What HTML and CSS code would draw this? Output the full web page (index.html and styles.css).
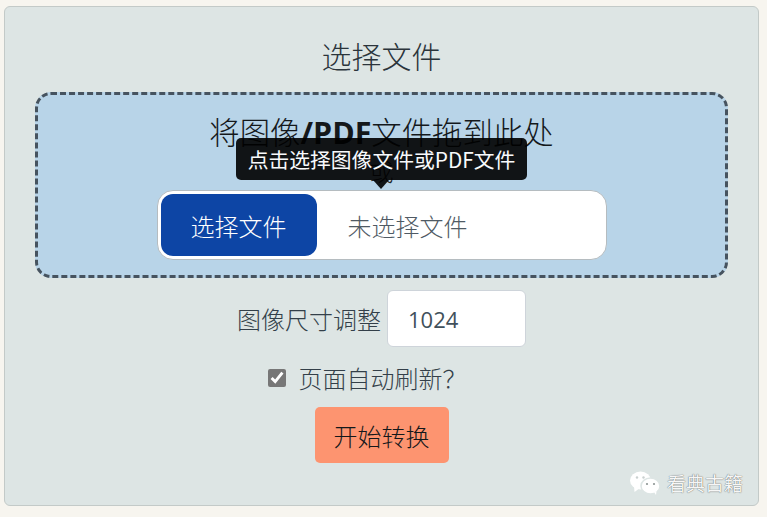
FILE: index.html
```html
<!DOCTYPE html>
<html lang="zh-CN">
<head>
    <meta charset="UTF-8">
    <meta name="viewport" content="width=device-width, initial-scale=1.0">
    <title>选择文件</title>
    <link rel="stylesheet" href="styles.css">
</head>
<body>
    <div class="card">
        <h2 class="card-title">选择文件</h2>

        <div class="drop-zone">
            <h3 class="drop-title">将图像<b>/PDF</b>文件拖到此处</h3>
            <p class="drop-or">或</p>
            <div class="tooltip">点击选择图像文件或PDF文件</div>
            <div class="file-picker">
                <span class="file-button">选择文件</span>
                <span class="file-name">未选择文件</span>
            </div>
        </div>

        <div class="size-row">
            <label for="size">图像尺寸调整</label>
            <input id="size" class="size-input" type="text" value="1024">
        </div>

        <div class="check-row">
            <input id="refresh" class="check" type="checkbox" checked>
            <label for="refresh">页面自动刷新？</label>
        </div>

        <button class="start-button">开始转换</button>

        <div class="watermark">
            <svg class="wechat" width="32" height="24" viewBox="0 0 32 24">
                <ellipse cx="11.5" cy="9.5" rx="10.5" ry="9" fill="#fff"/>
                <path d="M5 15 L5.5 21 L11 17 Z" fill="#fff"/>
                <ellipse cx="21.5" cy="15" rx="9.5" ry="8" fill="#fff" stroke="#dde5e4" stroke-width="1.5"/>
                <path d="M25 21 L27 24 L27.5 20 Z" fill="#fff"/>
                <circle cx="8" cy="6.5" r="1.2" fill="#c9d0cf"/>
                <circle cx="14.5" cy="6.5" r="1.2" fill="#c9d0cf"/>
                <circle cx="18" cy="13" r="1.1" fill="#8d9594"/>
                <circle cx="25" cy="13" r="1.1" fill="#8d9594"/>
            </svg>
            <span>看典古籍</span>
        </div>
    </div>
</body>
</html>
```

FILE: styles.css
```css
* {
    margin: 0;
    padding: 0;
    box-sizing: border-box;
}

body {
    font-family: "Noto Sans CJK SC", "Noto Sans", sans-serif;
    font-weight: 300;
    background: #f7f5ef;
    color: #333f49;
    padding: 6px 8px 11px 4px;
}

.card {
    position: relative;
    height: 500px;
    background: #dde5e4;
    border: 1px solid #c3cac8;
    border-radius: 6px;
    padding: 29px 30px 0;
    display: flex;
    flex-direction: column;
    align-items: center;
}

.card-title {
    font-size: 30px;
    font-weight: 300;
    line-height: 38px;
    color: #2b343b;
    margin-bottom: 18px;
}

.drop-zone {
    position: relative;
    width: 693px;
    height: 186px;
    flex-shrink: 0;
    background: #b8d4e8;
    border: 3px dashed #46535f;
    border-radius: 16px;
    display: flex;
    flex-direction: column;
    align-items: center;
    padding-top: 17px;
}

.drop-title {
    font-size: 30.4px;
    font-weight: 300;
    line-height: 38px;
    color: #14181b;
}

.drop-title b {
    font-family: "Open Sans", "Noto Sans", sans-serif;
    font-weight: 700;
}

.drop-or {
    font-size: 24px;
    line-height: 30px;
    color: #212529;
    margin-top: 4px;
}

.tooltip {
    position: absolute;
    top: 43px;
    left: 198px;
    width: 291px;
    height: 42px;
    background: #000;
    opacity: 0.9;
    color: #fff;
    border-radius: 5px;
    font-size: 20.8px;
    font-weight: 400;
    line-height: 42px;
    text-align: center;
    white-space: nowrap;
}

.tooltip::after {
    content: "";
    position: absolute;
    top: 42px;
    left: 137px;
    border-style: solid;
    border-width: 9px 8px 0;
    border-color: #000 transparent transparent;
}

.file-picker {
    width: 450px;
    height: 70px;
    flex-shrink: 0;
    margin-top: 4px;
    background: #fff;
    border: 1px solid #b5bcc0;
    border-radius: 16px;
    padding: 3px;
    display: flex;
    align-items: center;
    font-size: 24px;
}

.file-button {
    width: 156px;
    height: 62px;
    background: #0d45a5;
    color: #fff;
    border-radius: 12px;
    display: flex;
    align-items: center;
    justify-content: center;
}

.file-name {
    margin-left: 31px;
    color: #4f5a64;
}

.size-row {
    display: flex;
    align-items: center;
    gap: 6px;
    margin-top: 12px;
    font-size: 24px;
}

.size-input {
    width: 139px;
    height: 57px;
    border: 1px solid #ced4da;
    border-radius: 6px;
    padding: 0 20px;
    font-family: "Open Sans", "Noto Sans", sans-serif;
    font-size: 22px;
    color: #41505b;
    background: #fff;
}

.check-row {
    display: flex;
    align-items: center;
    gap: 13px;
    margin-top: 14px;
    padding-right: 29px;
    font-size: 24px;
    line-height: 34px;
}

.check {
    width: 18px;
    height: 18px;
    accent-color: #777;
}

.start-button {
    width: 134px;
    height: 56px;
    margin-top: 12px;
    background: #fd9470;
    border: none;
    border-radius: 5px;
    font-family: inherit;
    font-weight: 300;
    font-size: 24px;
    color: #14181b;
}

.watermark {
    position: absolute;
    right: 15px;
    bottom: 8px;
    display: flex;
    align-items: center;
    gap: 6px;
    color: #f6f6f6;
    font-size: 19px;
    font-weight: 400;
    line-height: 28px;
    text-shadow: 0 0 1px #333;
}
```
